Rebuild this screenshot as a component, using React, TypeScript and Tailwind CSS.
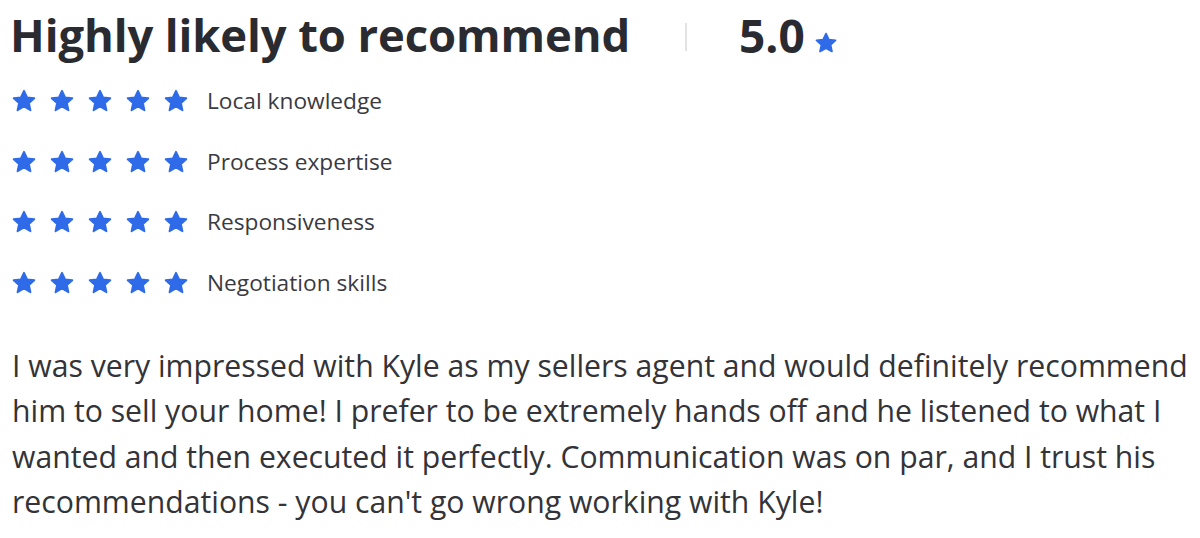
const labels = ["Local knowledge", "Process expertise", "Responsiveness", "Negotiation skills"];

function Star({ className }: { className: string }) {
  return (
    <svg className={className} viewBox="0 0 24 24" fill="currentColor" stroke="currentColor" strokeWidth="1.8" strokeLinejoin="round">
      <path d="M12 2.6l2.85 6.1 6.65.72-4.95 4.5 1.38 6.55L12 17.1l-5.93 3.37 1.38-6.55-4.95-4.5 6.65-.72z" />
    </svg>
  );
}

export default function App() {
  return (
    <div className="w-[1200px] h-[538px] bg-white pl-[12px] pt-[6px] font-['Open_Sans',sans-serif]">
      <div className="flex items-center h-[58px]">
        <h2 className="text-[45.4px] font-bold text-[#2a2b31] leading-none -ml-[2px] tracking-[-0.1px]">Highly likely to recommend</h2>
        <div className="w-[2px] h-[28px] bg-[#e3e3e3] ml-[55px] mr-[52px] mt-[4px]"></div>
        <span className="text-[46px] font-bold text-[#2a2b31] leading-none">5.0</span>
        <Star className="w-[24px] h-[24px] text-[#2f6be8] ml-[9px] mt-[16px]" />
      </div>

      <div className="flex flex-col mt-[7px]">
        {labels.map((label) => (
          <div key={label} className="flex items-center h-[60.5px]">
            <div className="flex gap-[12px] -ml-[1px]">
              <Star className="w-[26px] h-[26px] text-[#2f6be8]" />
              <Star className="w-[26px] h-[26px] text-[#2f6be8]" />
              <Star className="w-[26px] h-[26px] text-[#2f6be8]" />
              <Star className="w-[26px] h-[26px] text-[#2f6be8]" />
              <Star className="w-[26px] h-[26px] text-[#2f6be8]" />
            </div>
            <span className="ml-[18px] text-[22.7px] text-[#3a3a3f]">{label}</span>
          </div>
        ))}
      </div>

      <p className="mt-[30px] w-[1186px] text-[30.2px] leading-[45.4px] text-[#333338]">
        I was very impressed with Kyle as my sellers agent and would definitely recommend him to sell your home! I prefer to be extremely hands off and he listened to what I wanted and then executed it perfectly. Communication was on par, and I trust his recommendations - you can't go wrong working with Kyle!
      </p>
    </div>
  );
}
